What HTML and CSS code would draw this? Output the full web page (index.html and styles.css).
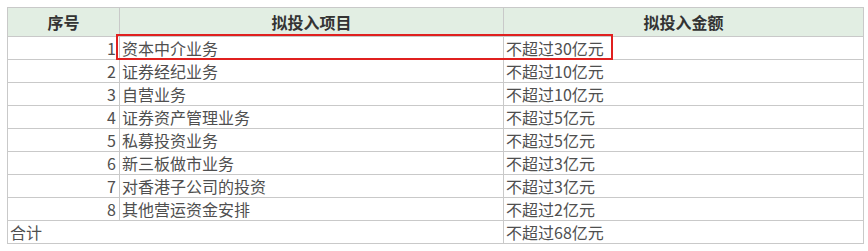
FILE: index.html
```html
<!DOCTYPE html>
<html lang="zh">
<head>
<meta charset="utf-8">
<link rel="stylesheet" href="styles.css">
</head>
<body>
<div class="wrap">
<table class="tbl">
  <colgroup><col class="c1"><col class="c2"><col class="c3"></colgroup>
  <thead>
    <tr><th>序号</th><th>拟投入项目</th><th>拟投入金额</th></tr>
  </thead>
  <tbody>
    <tr><td class="num">1</td><td>资本中介业务</td><td>不超过30亿元</td></tr>
    <tr><td class="num">2</td><td>证券经纪业务</td><td>不超过10亿元</td></tr>
    <tr><td class="num">3</td><td>自营业务</td><td>不超过10亿元</td></tr>
    <tr><td class="num">4</td><td>证券资产管理业务</td><td>不超过5亿元</td></tr>
    <tr><td class="num">5</td><td>私募投资业务</td><td>不超过5亿元</td></tr>
    <tr><td class="num">6</td><td>新三板做市业务</td><td>不超过3亿元</td></tr>
    <tr><td class="num">7</td><td>对香港子公司的投资</td><td>不超过3亿元</td></tr>
    <tr><td class="num">8</td><td>其他营运资金安排</td><td>不超过2亿元</td></tr>
    <tr><td colspan="2">合计</td><td>不超过68亿元</td></tr>
  </tbody>
</table>
<div class="highlight"></div>
</div>
</body>
</html>
```
FILE: styles.css
```css
html, body {
  margin: 0;
  padding: 0;
  background: #ffffff;
}
body {
  padding: 7px 0 0 7px;
  font-family: "Noto Sans CJK SC", "Noto Sans", sans-serif;
}
.wrap {
  position: relative;
  width: 856px;
}
.tbl {
  border-collapse: collapse;
  table-layout: fixed;
  width: 856px;
  font-size: 16px;
  color: #4f4f4f;
}
.c1 { width: 112px; }
.c2 { width: 384px; }
.c3 { width: 360px; }
.tbl th, .tbl td {
  border: 1px solid #c9c9c9;
  padding: 0 2px;
  white-space: nowrap;
  line-height: 20px;
}
.tbl th {
  background: #e2eee3;
  color: #333333;
  font-weight: bold;
  height: 28px;
  text-align: center;
  font-size: 16px;
}
.tbl td {
  height: 22px;
  text-align: left;
}
.tbl td.num {
  text-align: right;
  padding-right: 3px;
}
.highlight {
  position: absolute;
  left: 109px;
  top: 27px;
  width: 497px;
  height: 26px;
  box-sizing: border-box;
  border: 2px solid #e0201f;
  pointer-events: none;
}
```
